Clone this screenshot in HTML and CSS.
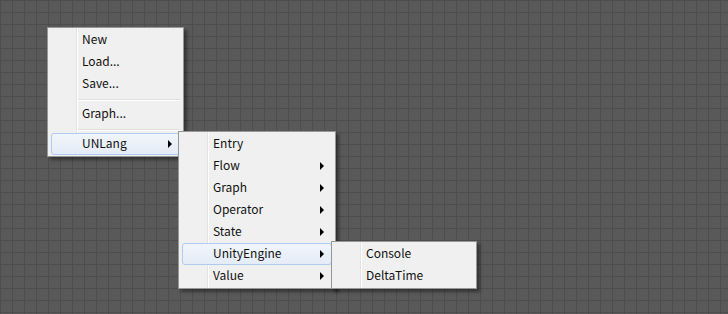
FILE: index.html
```html
<!DOCTYPE html>
<html lang="en">
<head>
  <meta charset="UTF-8">
  <title>Graph Editor - Context Menu</title>
  <link rel="stylesheet" href="styles.css">
</head>
<body>

  <div class="canvas">

    <!-- Root menu -->
    <div class="menu menu-root">
      <div class="item">New</div>
      <div class="item">Load...</div>
      <div class="item">Save...</div>
      <div class="sep"></div>
      <div class="item">Graph...</div>
      <div class="sep"></div>
      <div class="item sub active">UNLang</div>
    </div>

    <!-- UNLang -->
    <div class="menu menu-unlang">
      <div class="item">Entry</div>
      <div class="item sub">Flow</div>
      <div class="item sub">Graph</div>
      <div class="item sub">Operator</div>
      <div class="item sub">State</div>
      <div class="item sub active">UnityEngine</div>
      <div class="item sub">Value</div>
    </div>

    <!-- UnityEngine -->
    <div class="menu menu-unity">
      <div class="item">Console</div>
      <div class="item">DeltaTime</div>
    </div>

  </div>

</body>
</html>
```

FILE: styles.css
```css
html, body {
  margin: 0;
  height: 100%;
}

body {
  font-family: "Noto Sans CJK SC", "Noto Sans", sans-serif;
  font-size: 12px;
  background-color: #595959;
  background-image:
    linear-gradient(to right, #4d4d4d 1px, transparent 1px),
    linear-gradient(to bottom, #4d4d4d 1px, transparent 1px);
  background-size: 12px 12px;
  background-position: 0 0;
  overflow: hidden;
}

.canvas {
  position: relative;
  width: 728px;
  height: 314px;
}

.menu {
  position: absolute;
  box-sizing: border-box;
  background: #f0f0f0;
  border: 1px solid #979797;
  padding: 1px 3px;
  box-shadow: 3px 3px 3px rgba(0,0,0,0.4);
}

/* icon gutter line */
.menu::before {
  content: "";
  position: absolute;
  top: 0;
  bottom: 0;
  left: 28px;
  width: 1px;
  background: #e2e3e3;
  border-right: 1px solid #fff;
}

.menu-root {
  left: 47px;
  top: 27px;
  width: 137px;
}

.menu-unlang {
  left: 178px;
  top: 131px;
  width: 158px;
  z-index: 2;
}

.menu-unity {
  left: 331px;
  top: 241px;
  width: 146px;
  z-index: 3;
}

.item {
  position: relative;
  height: 22px;
  line-height: 18px;
  padding-left: 30px;
  color: #111;
  box-sizing: border-box;
  border: 1px solid transparent;
  border-radius: 3px;
  z-index: 1;
}

.item.active {
  background: linear-gradient(to bottom, #f1f5fb, #e4ecf7);
  border-color: #aecbf0;
}

.item.sub::after {
  content: "";
  position: absolute;
  right: 7px;
  top: 6px;
  border-left: 4px solid #000;
  border-top: 4px solid transparent;
  border-bottom: 4px solid transparent;
}

.sep {
  position: relative;
  height: 8px;
  margin-left: 27px;
  z-index: 1;
}

.sep::before {
  content: "";
  position: absolute;
  left: 0;
  right: 0;
  top: 4px;
  height: 1px;
  background: #e0e0e0;
  border-bottom: 1px solid #fff;
}
```
